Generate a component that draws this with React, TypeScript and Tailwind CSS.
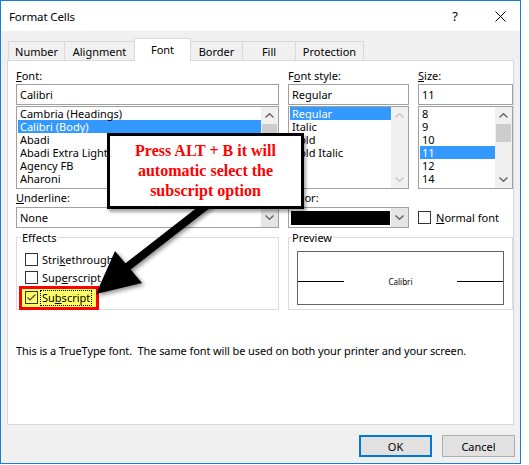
import React from "react";
import clsx from "clsx";

function Chevron({ dir, color = "#606060" }: { dir: "up" | "down"; color?: string }) {
  return (
    <svg width="9" height="5" viewBox="0 0 9 5" fill="none">
      <path
        d={dir === "up" ? "M0.5 4.5 L4.5 0.7 L8.5 4.5" : "M0.5 0.5 L4.5 4.3 L8.5 0.5"}
        stroke={color}
        strokeWidth="1.3"
      />
    </svg>
  );
}

function ScrollBar({ thumb, disabled }: { thumb?: string; disabled?: boolean }) {
  const c = disabled ? "#c4c4c4" : "#606060";
  return (
    <div className="w-[17px] h-full bg-[#f0f0f0] flex flex-col shrink-0">
      <div className="h-[17px] flex items-center justify-center">
        <Chevron dir="up" color={c} />
      </div>
      <div className="flex-1">{thumb && <div className={clsx("bg-[#cdcdcd] mx-[1px]", thumb)} />}</div>
      <div className="h-[17px] flex items-center justify-center">
        <Chevron dir="down" color={c} />
      </div>
    </div>
  );
}

function ListBox({ items, selected, scroll }: { items: string[]; selected: number; scroll: React.ReactNode }) {
  return (
    <div className="mt-[1px] h-[83px] border border-[#a0a0a0] bg-white flex">
      <div className="flex-1 pl-[1px] overflow-hidden">
        {items.map((t, i) => (
          <div
            key={t}
            className={clsx("h-[13px] leading-[13px] pl-[2px] whitespace-nowrap", i === selected && "bg-[#3399ff] text-white")}
          >
            {t}
          </div>
        ))}
      </div>
      {scroll}
    </div>
  );
}

function TextBox({ value }: { value: string }) {
  return <div className="mt-[1px] h-[21px] border border-[#a0a0a0] bg-white pl-[3px] flex items-center">{value}</div>;
}

function Check({ checked }: { checked?: boolean }) {
  return (
    <span className={clsx("w-[13px] h-[13px] border border-[#333333] flex items-center justify-center shrink-0", !checked && "bg-white")}>
      {checked && (
        <svg width="11" height="11" viewBox="0 0 11 11">
          <path d="M1.5 5.5 L4 8 L9.5 2.5" fill="none" stroke="#444444" strokeWidth="1.2" />
        </svg>
      )}
    </span>
  );
}

function Tab({ label, w, selected, last }: { label: string; w: string; selected?: boolean; last?: boolean }) {
  if (selected)
    return (
      <div className={clsx("relative z-10 -mb-[1px] h-[23px] bg-white border-t border-x border-[#d9d9d9] flex justify-center pt-[3px]", w)}>
        {label}
      </div>
    );
  return (
    <div className={clsx("h-[19px] bg-[#f0f0f0] border-t border-l border-[#d9d9d9] flex items-center justify-center", w, last && "border-r")}>
      {label}
    </div>
  );
}

export default function App() {
  return (
    <div className="relative w-[529px] h-[465px] bg-white font-['Noto_Sans',sans-serif] text-[11px] leading-[15px] text-black overflow-hidden">
      <div className="w-[521px] h-[464px] border border-[#1a7fd4] bg-[#f0f0f0] flex flex-col">
        {/* title bar */}
        <div className="h-[30px] bg-white flex items-center shrink-0">
          <span className="pl-[8px] text-[11.5px] tracking-[-0.1px] flex-1">Format Cells</span>
          <span className="w-[50px] text-center text-[13px]">?</span>
          <span className="w-[40px] flex justify-center">
            <svg width="11" height="11" viewBox="0 0 11 11">
              <path d="M0.5 0.5 L10.5 10.5 M10.5 0.5 L0.5 10.5" stroke="#000" strokeWidth="1" />
            </svg>
          </span>
        </div>

        {/* tabs */}
        <div className="mt-[7px] h-[22px] flex items-end pl-[7px] shrink-0">
          <Tab label="Number" w="w-[56px]" />
          <Tab label="Alignment" w="w-[70px]" />
          <Tab label="Font" w="w-[57px]" selected />
          <div className="h-[19px] w-[51px] bg-[#f0f0f0] border-t border-[#d9d9d9] flex items-center justify-center">Border</div>
          <Tab label="Fill" w="w-[53px]" />
          <Tab label="Protection" w="w-[69px]" last />
        </div>

        {/* panel */}
        <div className="mx-[6px] h-[365px] bg-white border border-[#d9d9d9] pl-[8px] pt-[7px] shrink-0">
          <div className="grid grid-cols-[263px_121px_95px] gap-x-[9px]">
            <div>
              <div className="h-[15px]">
                <u>F</u>ont:
              </div>
              <TextBox value="Calibri" />
              <ListBox
                items={["Cambria (Headings)", "Calibri (Body)", "Abadi", "Abadi Extra Light", "Agency FB", "Aharoni"]}
                selected={1}
                scroll={<ScrollBar thumb="h-[30px]" />}
              />
            </div>
            <div>
              <div className="h-[15px]">
                F<u>o</u>nt style:
              </div>
              <TextBox value="Regular" />
              <ListBox items={["Regular", "Italic", "Bold", "Bold Italic"]} selected={0} scroll={<ScrollBar disabled />} />
            </div>
            <div>
              <div className="h-[15px]">
                <u>S</u>ize:
              </div>
              <TextBox value="11" />
              <ListBox items={["8", "9", "10", "11", "12", "14"]} selected={3} scroll={<ScrollBar thumb="h-[18px]" />} />
            </div>

            {/* row 2 */}
            <div className="pt-[1px]">
              <div className="h-[15px]">
                <u>U</u>nderline:
              </div>
              <div className="mt-[2px] h-[21px] border border-[#a0a0a0] bg-white flex">
                <span className="flex-1 pl-[3px] flex items-center">None</span>
                <span className="w-[17px] h-full bg-[#e5e5e5] flex items-center justify-center">
                  <Chevron dir="down" />
                </span>
              </div>
            </div>
            <div className="pt-[1px]">
              <div className="h-[15px]">
                <u>C</u>olor:
              </div>
              <div className="mt-[2px] h-[21px] border border-[#a0a0a0] bg-white flex">
                <span className="ml-[2px] mt-[3px] w-[99px] h-[14px] bg-black" />
                <span className="ml-[1px] w-[17px] h-full bg-[#e5e5e5] flex items-center justify-center">
                  <Chevron dir="down" />
                </span>
              </div>
            </div>
            <div className="pt-[22px]">
              <div className="flex items-center gap-[5px] h-[13px]">
                <Check />
                <span>
                  <u>N</u>ormal font
                </span>
              </div>
            </div>

            {/* row 3 */}
            <fieldset className="mt-[2px] h-[80px] border border-[#dcdcdc]">
              <legend className="ml-[4px] px-[1px] leading-[15px]">Effects</legend>
              <div className="pt-[5px] pl-[8px] flex flex-col">
                <div className="h-[18px] flex items-center gap-[4px]">
                  <Check />
                  <span>
                    Stri<u>k</u>ethrough
                  </span>
                </div>
                <div className="h-[18px] flex items-center gap-[4px]">
                  <Check />
                  <span>
                    Sup<u>e</u>rscript
                  </span>
                </div>
                <div className="relative -ml-[6px] w-[80px] h-[24px] border-[3px] border-[#ff0000] bg-[#ffff66] flex items-center gap-[2px] pl-[3px] pb-[1px]">
                  <Check checked />
                  <span className="border border-dotted border-black px-[1px] leading-[14px]">
                    Su<u>b</u>script
                  </span>
                </div>
              </div>
            </fieldset>
            <fieldset className="col-span-2 mt-[2px] h-[80px] border border-[#dcdcdc]">
              <legend className="ml-[2px] px-[1px] leading-[15px]">Preview</legend>
              <div className="mt-[6px] ml-[8px] w-[207px] h-[54px] border border-[#646464]">
                <div className="mt-[24px] h-[11px] flex items-center">
                  <span className="w-[46px] h-px bg-black" />
                  <span className="flex-1 text-center text-[8px] leading-[11px]">Calibri</span>
                  <span className="w-[46px] h-px bg-black" />
                </div>
              </div>
            </fieldset>

            <div className="col-span-3 mt-[33px] whitespace-pre tracking-[-0.1px]">
              {"This is a TrueType font.  The same font will be used on both your printer and your screen."}
            </div>
          </div>
        </div>

        {/* buttons */}
        <div className="mt-[10px] flex justify-end gap-[10px] pr-[5px] shrink-0">
          <button className="w-[73px] h-[22px] bg-[#e1e1e1] border-2 border-[#0078d7] text-[11px]">OK</button>
          <button className="w-[73px] h-[22px] bg-[#e1e1e1] border border-[#adadad] text-[11px]">Cancel</button>
        </div>
      </div>

      {/* annotation arrow */}
      <svg
        className="absolute left-0 top-0 pointer-events-none drop-shadow-[2px_2px_2px_rgba(0,0,0,0.45)]"
        width="529"
        height="465"
        viewBox="0 0 529 465"
      >
        <line x1="207" y1="205" x2="126" y2="268" stroke="#000" strokeWidth="8" strokeLinecap="round" />
        <polygon points="96,294 115,251 142,283" fill="#000" />
      </svg>

      {/* annotation callout */}
      <div className="absolute left-[107px] top-[133px] w-[197px] h-[76px] border-[3px] border-black bg-white flex flex-col items-center justify-center font-['Liberation_Serif',serif] font-bold text-[16px] leading-[20px] text-[#ff0000] shadow-[2px_3px_3px_rgba(0,0,0,0.35)]">
        <div>Press ALT + B it will</div>
        <div>automatic select the</div>
        <div>subscript option</div>
      </div>
    </div>
  );
}
